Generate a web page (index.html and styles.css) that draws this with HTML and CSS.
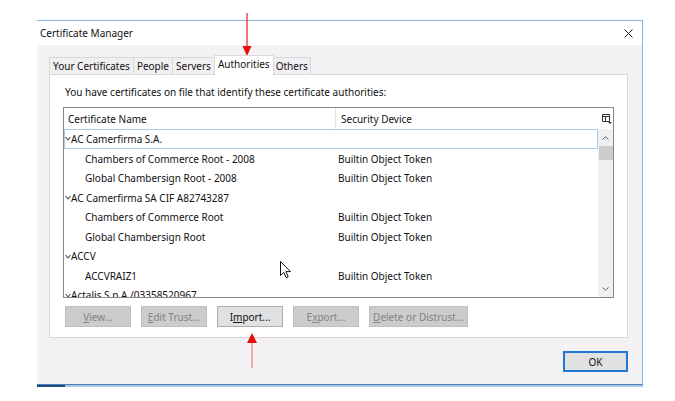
FILE: index.html
```html
<!DOCTYPE html>
<html>
<head>
<meta charset="utf-8">
<link rel="stylesheet" href="styles.css">
</head>
<body>
<div class="window">
  <div class="titlebar">
    <span class="title">Certificate Manager</span>
    <svg class="close" width="9" height="9" viewBox="0 0 9 9"><path d="M0.5 0.5L8.5 8.5M8.5 0.5L0.5 8.5" stroke="#222" stroke-width="1" fill="none"/></svg>
  </div>
  <div class="client">
    <div class="tabs">
      <div class="tab">Your Certificates</div>
      <div class="tab">People</div>
      <div class="tab">Servers</div>
      <div class="tab sel">Authorities</div>
      <div class="tab">Others</div>
    </div>
    <div class="panel">
      <p class="prompt">You have certificates on file that identify these certificate authorities:</p>
      <div class="tree">
        <div class="thead">
          <div class="th name">Certificate Name</div>
          <div class="th dev">Security Device</div>
          <div class="th picker">
            <svg width="10" height="10" viewBox="0 0 10 10"><path d="M0.5 0.5H7.5V7.5H0.5Z M0.5 2.5H7.5 M3.5 2.5V7.5" stroke="#333" fill="none"/><path d="M6 8H10L8 10Z" fill="#333"/></svg>
          </div>
        </div>
        <div class="tbody">
          <div class="rows">
            <div class="row group focus"><svg class="twisty" width="6" height="5" viewBox="0 0 6 5"><path d="M0.5 1L3 3.8L5.5 1" stroke="#555" stroke-width="1.1" fill="none"/></svg><span>AC Camerfirma S.A.</span></div>
            <div class="row"><span class="c1">Chambers of Commerce Root - 2008</span><span class="c2">Builtin Object Token</span></div>
            <div class="row"><span class="c1">Global Chambersign Root - 2008</span><span class="c2">Builtin Object Token</span></div>
            <div class="row group"><svg class="twisty" width="6" height="5" viewBox="0 0 6 5"><path d="M0.5 1L3 3.8L5.5 1" stroke="#555" stroke-width="1.1" fill="none"/></svg><span>AC Camerfirma SA CIF A82743287</span></div>
            <div class="row"><span class="c1">Chambers of Commerce Root</span><span class="c2">Builtin Object Token</span></div>
            <div class="row"><span class="c1">Global Chambersign Root</span><span class="c2">Builtin Object Token</span></div>
            <div class="row group"><svg class="twisty" width="6" height="5" viewBox="0 0 6 5"><path d="M0.5 1L3 3.8L5.5 1" stroke="#555" stroke-width="1.1" fill="none"/></svg><span>ACCV</span></div>
            <div class="row"><span class="c1">ACCVRAIZ1</span><span class="c2">Builtin Object Token</span></div>
            <div class="row group"><svg class="twisty" width="6" height="5" viewBox="0 0 6 5"><path d="M0.5 1L3 3.8L5.5 1" stroke="#555" stroke-width="1.1" fill="none"/></svg><span>Actalis S.p.A./03358520967</span></div>
          </div>
          <div class="vscroll">
            <div class="sb-btn"><svg width="7" height="4" viewBox="0 0 7 4"><path d="M0.5 3.5L3.5 0.8L6.5 3.5" stroke="#606060" fill="none"/></svg></div>
            <div class="thumb"></div>
            <div class="track"></div>
            <div class="sb-btn down"><svg width="7" height="4" viewBox="0 0 7 4"><path d="M0.5 0.5L3.5 3.2L6.5 0.5" stroke="#606060" fill="none"/></svg></div>
          </div>
        </div>
      </div>
      <div class="buttons">
        <button class="btn"><u>V</u>iew...</button>
        <button class="btn"><u>E</u>dit Trust...</button>
        <button class="btn on">I<u>m</u>port...</button>
        <button class="btn">E<u>x</u>port...</button>
        <button class="btn wide"><u>D</u>elete or Distrust...</button>
      </div>
    </div>
    <div class="footer"><button class="ok">OK</button></div>
  </div>
</div>
<div class="taskstrip"></div>

<svg class="arrow-top" width="12" height="44" viewBox="0 0 12 44"><path d="M6 0V34" stroke="#e02020" stroke-width="1.2"/><path d="M1.5 33H10.5L6 43Z" fill="#e60d0d"/></svg>
<svg class="arrow-bottom" width="12" height="36" viewBox="0 0 12 36"><path d="M6 9V35" stroke="#e77c7c" stroke-width="1.2"/><path d="M1 10H11L6 0Z" fill="#e60d0d"/></svg>
<svg class="cursor" width="12" height="18" viewBox="0 0 12 18"><path d="M0.5 0.5V14.5L3.8 11.4L6.2 16.8L8.2 15.9L5.9 10.6H10.5Z" fill="#fff" stroke="#111" stroke-width="1"/></svg>
</body>
</html>
```

FILE: styles.css
```css
html, body {
  margin: 0;
  padding: 0;
}
body {
  width: 675px;
  height: 401px;
  overflow: hidden;
  position: relative;
  background: #ffffff;
  font-family: "Noto Sans", "Open Sans", sans-serif;
  font-size: 10px;
  color: #111;
}
.window {
  margin: 20px 0 0 37px;
  width: 606px;
  box-sizing: border-box;
  border-top: 1px solid #83b6e3;
  border-right: 1px solid #83b6e3;
}
.titlebar {
  height: 24px;
  background: #ffffff;
  display: flex;
  align-items: center;
  justify-content: space-between;
  padding: 0 9px 0 3px;
}
.client {
  background: #f4f1f4;
  height: 339px;
  box-sizing: border-box;
  padding: 10px 0 0 12px;
}
.tabs {
  display: flex;
  align-items: flex-end;
  height: 19px;
}
.tab {
  height: 17px;
  box-sizing: border-box;
  border: 1px solid #d9d9d9;
  border-bottom: none;
  padding: 0 3px;
  margin-left: -1px;
  display: flex;
  align-items: center;
  background: #f2eff2;
  white-space: nowrap;
}
.tab:first-child {
  margin-left: 0;
}
.tab:last-child {
  padding: 0 2px;
}
.tab.sel {
  height: 20px;
  margin-bottom: -1px;
  background: #ffffff;
  position: relative;
  z-index: 1;
  padding: 1px 3px 0;
  align-items: flex-start;
}
.panel {
  width: 579px;
  height: 264px;
  box-sizing: border-box;
  background: #ffffff;
  border: 1px solid #d9d9d9;
  padding: 10px 0 0 13px;
}
.prompt {
  margin: 0 0 8px 2px;
  height: 14px;
  line-height: 14px;
}
.tree {
  width: 551px;
  height: 191px;
  box-sizing: border-box;
  border: 1px solid #828790;
  display: flex;
  flex-direction: column;
  background: #fff;
}
.thead {
  display: flex;
  height: 21px;
  flex: none;
}
.th {
  display: flex;
  align-items: center;
  box-sizing: border-box;
}
.th.name {
  width: 272px;
  padding-left: 4px;
  border-right: 1px solid #e3e3e3;
}
.th.dev {
  width: 262px;
  padding-left: 5px;
}
.th.picker {
  width: 15px;
  justify-content: center;
  padding-left: 2px;
}
.tbody {
  display: flex;
  flex: 1;
  min-height: 0;
}
.rows {
  width: 534px;
  overflow: hidden;
}
.row {
  height: 19.5px;
  box-sizing: border-box;
  border: 1px solid transparent;
  padding-top: 1px;
  display: flex;
  align-items: center;
  white-space: nowrap;
}
.row.focus {
  border-color: #a9cde9;
  padding-top: 0;
}
.twisty {
  margin: 0;
  flex: none;
}
.c1 {
  width: 271px;
  padding-left: 20px;
  box-sizing: border-box;
}
.c2 {
  padding-left: 2px;
}
.vscroll {
  width: 15px;
  background: #f0f0f0;
  display: flex;
  flex-direction: column;
}
.sb-btn {
  height: 17px;
  flex: none;
  display: flex;
  align-items: center;
  justify-content: center;
}
.sb-btn.down {
  padding-top: 2px;
}
.thumb {
  height: 14px;
  flex: none;
  margin: 0 0 0 1px;
  background: #cdcdcd;
}
.track {
  flex: 1;
}
.buttons {
  display: flex;
  margin: 8px 0 0 2px;
}
.btn {
  width: 66px;
  height: 21px;
  margin: 0 10px 0 0;
  padding: 0;
  box-sizing: border-box;
  border: 1px solid #bfbfbf;
  background: #cccccc;
  color: #838383;
  font: inherit;
}
.btn.on {
  background: #e1e1e1;
  border-color: #adadad;
  color: #111;
}
.btn.wide {
  width: 99px;
}
.footer {
  width: 579px;
  display: flex;
  justify-content: flex-end;
  margin-top: 13px;
}
.ok {
  width: 65px;
  height: 21px;
  box-sizing: border-box;
  border: 2px solid #1f78d1;
  background: #e1e1e1;
  font: inherit;
  color: #111;
  padding: 0;
}
.taskstrip {
  margin-left: 37px;
  width: 606px;
  height: 3px;
  box-sizing: border-box;
  border-top: 1px solid #4c7fb6;
  background: linear-gradient(to right, #1e4c78 0, #1e4c78 28px, #a8c6e3 28px);
}
.arrow-top {
  position: absolute;
  left: 241px;
  top: 13px;
}
.arrow-bottom {
  position: absolute;
  left: 246px;
  top: 333px;
}
.cursor {
  position: absolute;
  left: 280px;
  top: 261px;
}
```
